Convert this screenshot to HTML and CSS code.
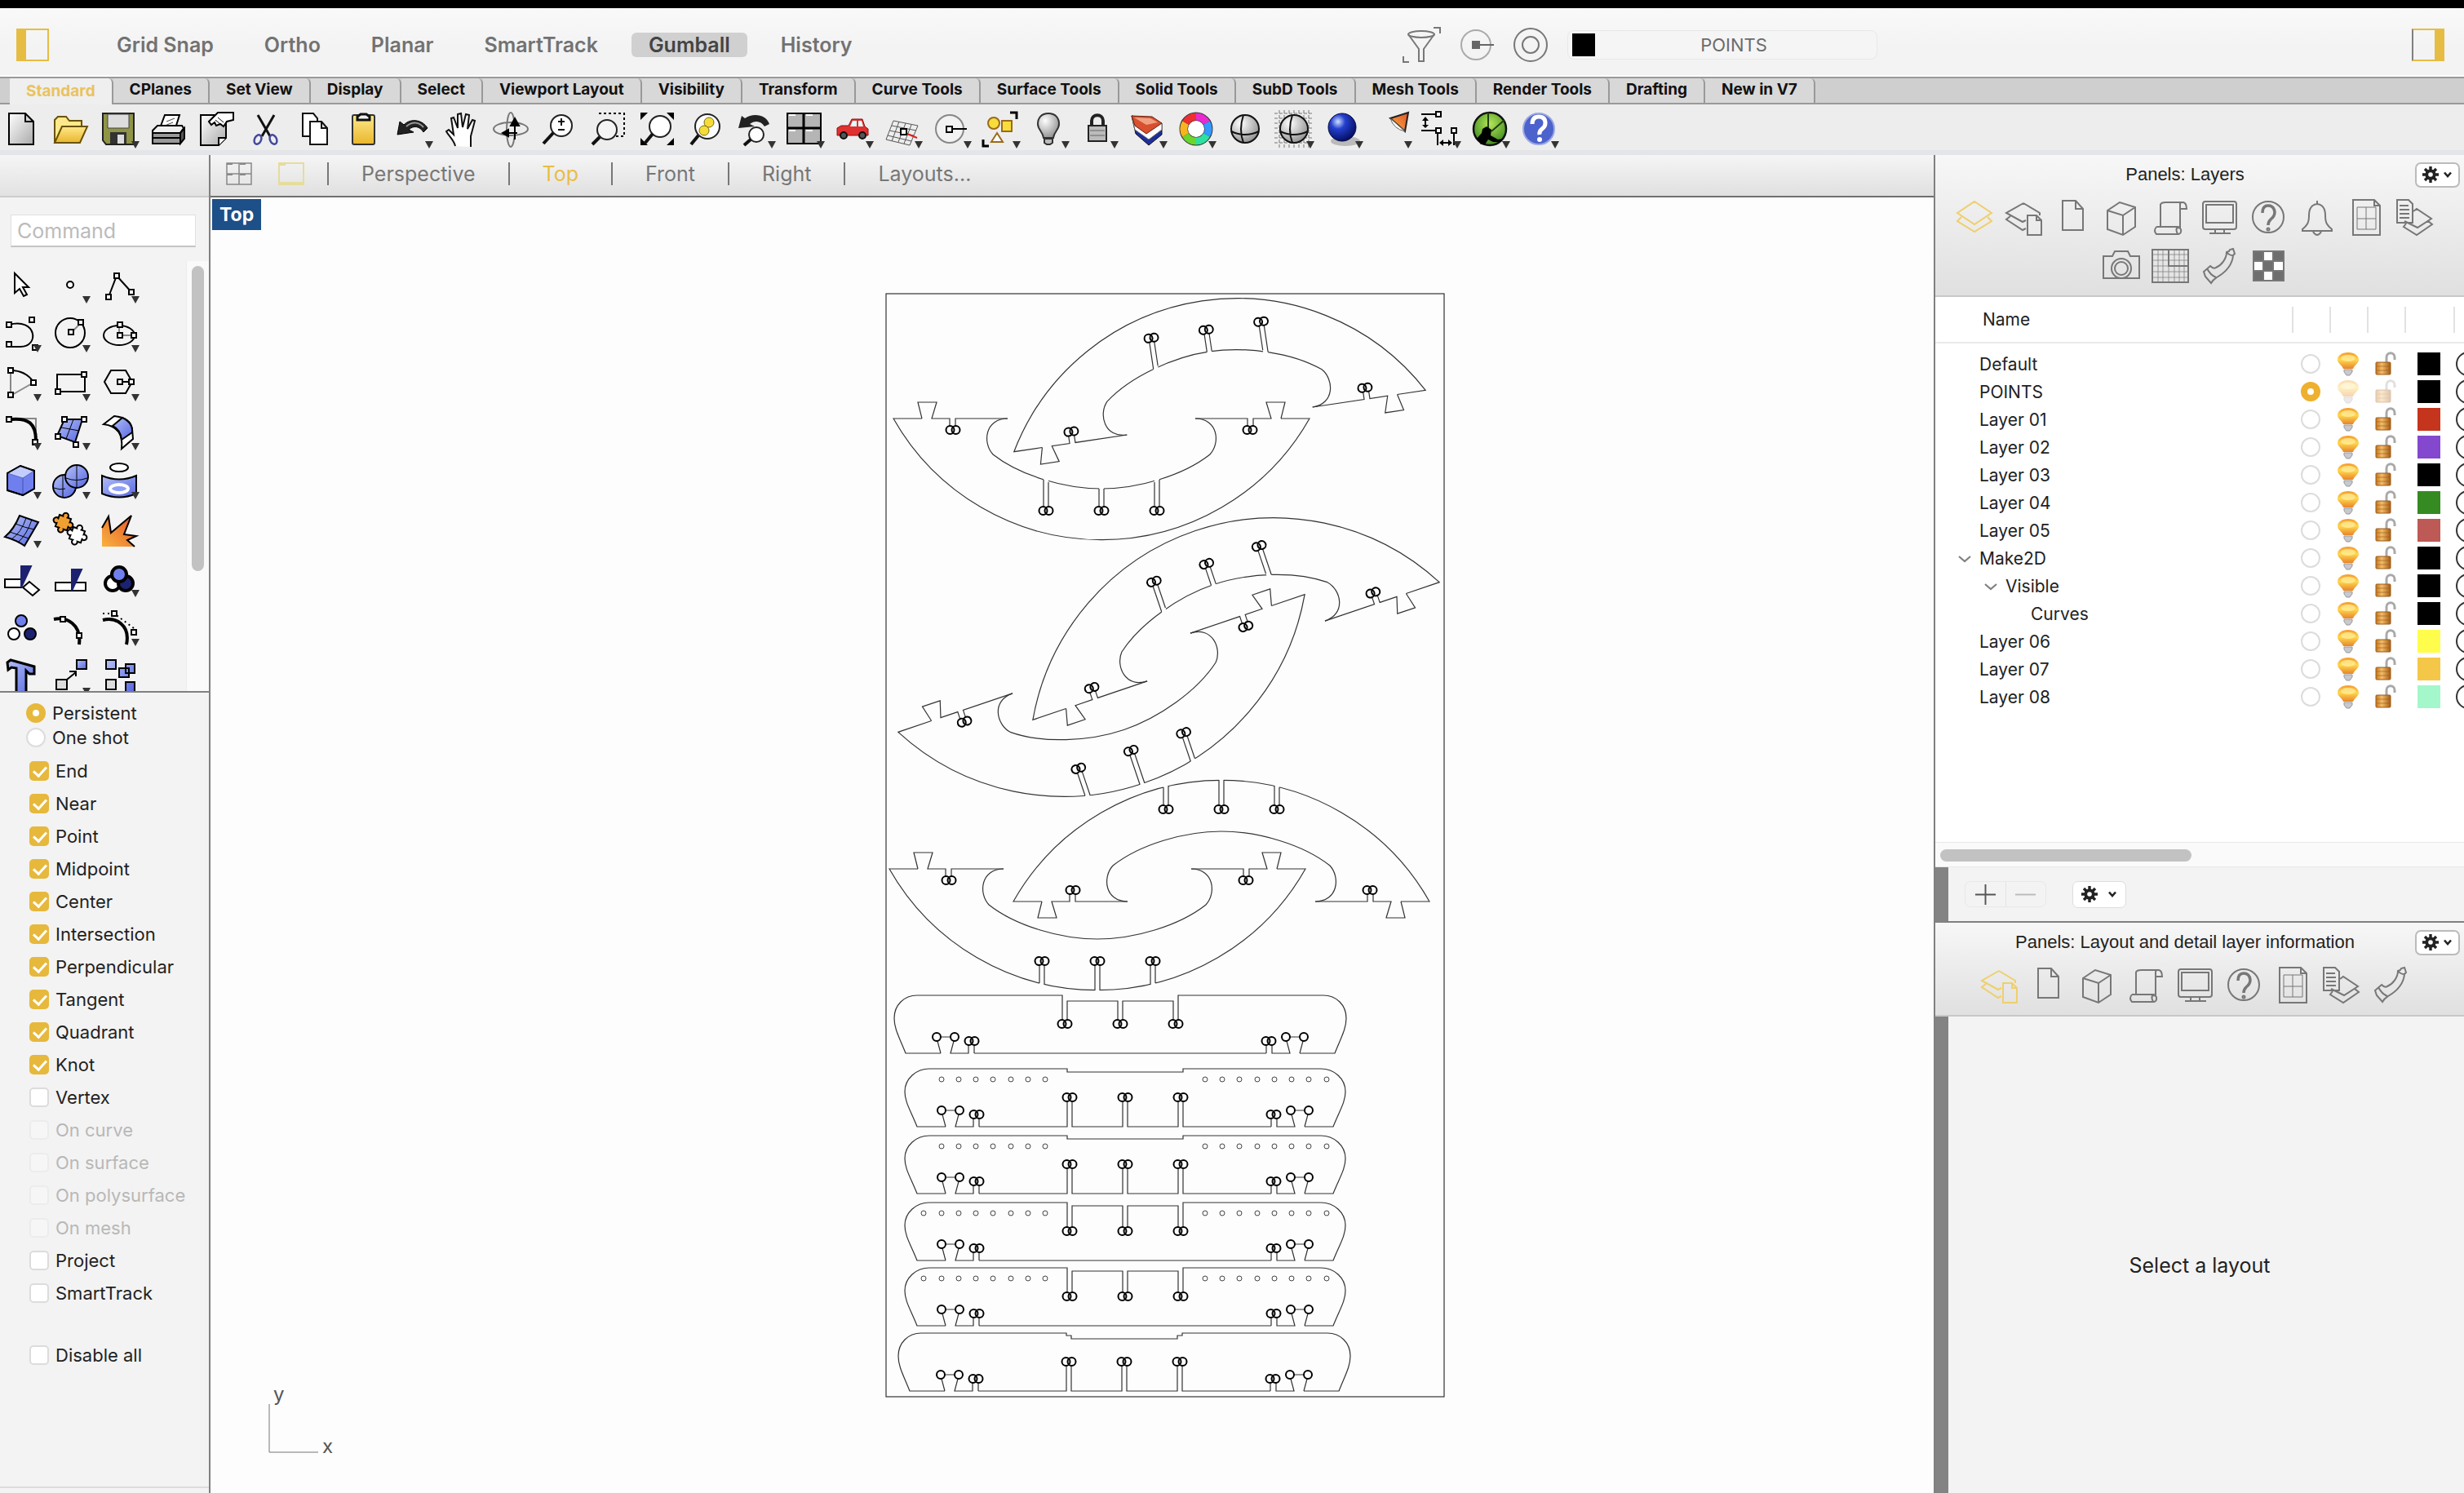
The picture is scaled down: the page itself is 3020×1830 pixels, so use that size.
FILE: index.html
```html
<!DOCTYPE html>
<html lang="en">
<head>
<meta charset="utf-8">
<title>Rhino – Top viewport</title>
<link rel="stylesheet" href="styles.css">
</head>
<body>
<svg class="defs" width="0" height="0" aria-hidden="true">
<defs>
<linearGradient id="gGrey" x1="0" y1="0" x2="1" y2="1"><stop offset="0" stop-color="#fff"/><stop offset="1" stop-color="#aaa"/></linearGradient>
<linearGradient id="gBlue" x1="0" y1="0" x2="1" y2="1"><stop offset="0" stop-color="#b4bff8"/><stop offset="1" stop-color="#5668e0"/></linearGradient>
<linearGradient id="gGold" x1="0" y1="0" x2="0" y2="1"><stop offset="0" stop-color="#ffe98a"/><stop offset="1" stop-color="#e8b62c"/></linearGradient>
<linearGradient id="gOrange" x1="1" y1="0" x2="0" y2="1"><stop offset="0" stop-color="#e2542a"/><stop offset="1" stop-color="#f9b23e"/></linearGradient>
<linearGradient id="gLamp" x1="0" y1="0" x2="0" y2="1"><stop offset="0" stop-color="#f39a2b"/><stop offset=".45" stop-color="#ffd84e"/><stop offset="1" stop-color="#e8842a"/></linearGradient>
<linearGradient id="gLock" x1="0" y1="0" x2="1" y2="0"><stop offset="0" stop-color="#c4761d"/><stop offset=".4" stop-color="#f3bd6b"/><stop offset="1" stop-color="#a55c12"/></linearGradient>
<radialGradient id="gBall" cx=".35" cy=".3" r=".75"><stop offset="0" stop-color="#cfe0ff"/><stop offset=".35" stop-color="#2440cf"/><stop offset="1" stop-color="#030b5c"/></radialGradient>
<radialGradient id="gSilver" cx=".35" cy=".3" r=".8"><stop offset="0" stop-color="#fff"/><stop offset="1" stop-color="#888"/></radialGradient>
<radialGradient id="gGreen" cx=".5" cy=".35" r=".65"><stop offset="0" stop-color="#b5e65a"/><stop offset="1" stop-color="#3d8a1e"/></radialGradient>

<symbol id="bulb" viewBox="0 0 28 30"><path d="M14 1C6 1 1 5 1 10c0 4 5 6 7 11h12c2-5 7-7 7-11 0-5-5-9-13-9z" fill="url(#gLamp)"/><ellipse cx="14" cy="8" rx="9" ry="4" fill="#fff0a0" opacity=".7"/><path d="M9 22h10v3l-3 4h-4l-3-4z" fill="#c8c8cf" stroke="#999" stroke-width="1"/></symbol>
<symbol id="unlock" viewBox="0 0 28 30"><path d="M15 14V7c0-7 10-7 10 0v3" fill="none" stroke="#a9a9a9" stroke-width="3"/><rect x="2" y="13" width="18" height="15" rx="1" fill="url(#gLock)" stroke="#9a5b18"/><path d="M3 18h16M3 23h16" stroke="#9a5b18" stroke-width="1" opacity=".6"/></symbol>
<symbol id="gear" viewBox="0 0 20 20"><g stroke="#222" stroke-width="3.4"><path d="M10 0v20M0 10h20M3 3l14 14M17 3L3 17"/></g><circle cx="10" cy="10" r="6.6" fill="#222"/><circle cx="10" cy="10" r="2.8" fill="#fff"/></symbol>
<symbol id="chev" viewBox="0 0 12 8"><path d="M2 1.500l4 4.500 4-4.500" fill="none" stroke="#222" stroke-width="2.600"/></symbol>
<symbol id="tri" viewBox="0 0 16 9"><path d="M1 1l7 6 7-6" fill="none" stroke="#808080" stroke-width="2.200"/></symbol>

<symbol id="pLayers" viewBox="0 0 48 48"><path d="M24 5L45 19 24 33 3 19zM8 24l-5 5 21 13 21-13-5-5"/></symbol>
<symbol id="pLayerDoc" viewBox="0 0 48 48"><path d="M24 7l20 12v3M27 28l-4 2L3 19 24 7M8 23l-5 4 20 13 4-2"/><path d="M29 22h11l6 6v18H29zM40 22v6h6"/></symbol>
<symbol id="pDoc" viewBox="0 0 48 48"><path d="M12 4h16l9 10v26H12zM28 4v10h9"/></symbol>
<symbol id="pBox" viewBox="0 0 48 48"><path d="M7 16L22 6l19 6v24L26 46 7 39zM7 16l19 6 15-10M26 22v24"/></symbol>
<symbol id="pScroll" viewBox="0 0 48 48"><path d="M12 8q2-2 6-2h22q4 1 4 8h-8M36 14V8q0-2 3-2M12 8v28M36 14v24M7 36h26q-3 3 0 9H7q-4-4 0-9M33 45q5 0 4-6-3-4-6 0"/></symbol>
<symbol id="pMonitor" viewBox="0 0 48 48"><rect x="4" y="5" width="41" height="34" rx="3"/><path d="M8 9h33v22H8zM19 39v4M30 39v4M12 44h26"/></symbol>
<symbol id="pHelp" viewBox="0 0 48 48"><circle cx="24" cy="24" r="19"/><path d="M17 19q0-9 7-9t8 8q0 5-5 9-3 3-3 7" stroke-width="3.500"/><circle cx="24" cy="39" r="1.500"/></symbol>
<symbol id="pBell" viewBox="0 0 48 48"><path d="M24 4v4M24 8c-8 1-10 7-10 14 0 9-2 12-8 17v2h36v-2c-6-5-8-8-8-17 0-7-2-13-10-14zM19 42q5 8 10 0"/></symbol>
<symbol id="pGrid" viewBox="0 0 48 48"><path d="M8 3h26l7 7v36H8zM34 3v7h7"/><path d="M13 12h23v27H13zM24 12v27M13 26h23" stroke-width="1"/></symbol>
<symbol id="pDocLayers" viewBox="0 0 48 48"><path d="M2 3h14l5 5v23H2zM5 10h11M5 15h12M5 20h12M5 25h12M22 17l4-3 18 12-17 11-16-8M40 29l5 4-19 13-16-10 3-4"/></symbol>
<symbol id="pCamera" viewBox="0 0 48 48"><path d="M2 12h11l3-6h16l3 6h11v27H2z"/><circle cx="24" cy="27" r="12"/><circle cx="24" cy="27" r="8"/></symbol>
<symbol id="pPlane" viewBox="0 0 48 48"><path d="M2 4h44v40H2z"/><path d="M2 10h44M2 17h44M2 24h44M2 31h44M2 38h44M9 4v40M15 4v40M22 4v40M29 4v40M35 4v40M41 4v40" stroke-width=".7"/><path d="M22 4v20h24"/></symbol>
<symbol id="pTube" viewBox="0 0 48 48"><path d="M33 7c0 8-6 16-13 19-3 2-5 0-7-2L5 31l2 6 7 8c2-4 4-5 7-7 12-7 19-15 20-27l2-2-2-6-4 1-1 2zM9 27q4 8 11 11M33 7q3 4 8 4"/></symbol>
<symbol id="pCheck" viewBox="0 0 48 48"><path d="M6 6h37v36H6z" fill="#fff"/><path d="M6 6h12v12H6zM30 6h13v12H30zM18 18h12v12H18zM6 30h12v12H6zM30 30h13v12H30z" fill="#6e6e6e"/></symbol>

<g id="pair"><circle cx="-3.500" cy="0" r="5"/><circle cx="3.500" cy="0" r="5"/></g>
<g id="chord">
<path class="ln" d="M-220 0l-5-20h23l-6 20h22v9M-179 9V0h64M220 0l5-20h-23l6 20h-22v9M179 9V0h-64"/>
<path class="ln" d="M-115 0C-143 0-146 30-133 44M115 0C143 0 146 30 133 44"/>
<g class="hole"><use href="#pair" x="-182" y="14"/><use href="#pair" x="182" y="14"/></g>
</g>
<g id="heads" class="hole"><use href="#pair" x="-68" y="113"/><use href="#pair" x="0" y="113"/><use href="#pair" x="68" y="113"/></g>
<path id="inner" class="ln" d="M-133 44C-100 70-45 86 0 86S100 70 133 44"/>
<path id="outer" class="ln" d="M-220 0h-35A293 293 0 0 0 255 0h-35"/>
<path id="outerWide" class="ln" d="M-220 0h-43A300 300 0 0 0 263 0h-43"/>
<g id="slotsIn"><path class="gap" d="M-71 72h6v12h-6zM-3 82h6v8h-6zM65 72h6v12h-6z"/><path class="ln" d="M-71 75v33M-65 78v30M-3 86v22M3 86v22M65 78v30M71 75v33"/></g>
<g id="slotsOut"><path class="gap" d="M-71 136h6v10h-6zM-3 144h6v8h-6zM65 136h6v10h-6z"/><path class="ln" d="M-71 118v22M-65 118v24M-3 118v31M3 118v31M65 118v24M71 118v22"/></g>
<g id="slotsOutWide"><path class="gap" d="M-71 143h6v10h-6zM-3 152h6v8h-6zM65 143h6v10h-6z"/><path class="ln" d="M-71 118v29M-65 118v31M-3 118v38M3 118v38M65 118v31M71 118v29"/></g>

<g id="feet">
<path class="ln" d="M-220 71l-4-15M-219 51h11M-204 56l-4 15h22V61M-179 61v10M220 71l4-15M219 51h-11M204 56l4 15h-22V61M179 61v10"/>
<g class="hole"><circle cx="-225" cy="51" r="5"/><circle cx="-203" cy="51" r="5"/><circle cx="225" cy="51" r="5"/><circle cx="203" cy="51" r="5"/><use href="#pair" x="-182" y="56"/><use href="#pair" x="182" y="56"/><use href="#pair" x="-68" y="35"/><use href="#pair" x="0" y="35"/><use href="#pair" x="68" y="35"/></g>
</g>
<path id="endsWide" class="ln" d="M-220 71h-43c-8-20-14-30-14-43 0-16 12-28 28-28M220 71h43c8-20 14-30 14-43 0-16-12-28-28-28"/>
<path id="ends" class="ln" d="M-220 71h-35c-8-20-15-30-15-43 0-16 14-28 30-28M220 71h35c8-20 15-30 15-43 0-16-14-28-30-28"/>
<path id="baseOpen" class="ln" d="M-179 71h108V40M-65 40v31h62V40M3 40v31h62V40M71 40v31h108"/>
<path id="baseFlat" class="ln" d="M-179 71h358"/>
<path id="topSlots" class="ln" d="M-240 0h169v30M-65 30V4h62v26M3 30V4h62v26M71 30V0h169"/>
<path id="topStep" class="ln" d="M-240 0h169v4H71V0h169"/>
<g id="dots7" class="dot"><circle cx="-225" cy="13" r="3"/><circle cx="-204" cy="13" r="3"/><circle cx="-183" cy="13" r="3"/><circle cx="-162" cy="13" r="3"/><circle cx="-140" cy="13" r="3"/><circle cx="-119" cy="13" r="3"/><circle cx="-98" cy="13" r="3"/></g>
<g id="dots8" class="dot"><circle cx="98" cy="13" r="3"/><circle cx="119" cy="13" r="3"/><circle cx="140" cy="13" r="3"/><circle cx="162" cy="13" r="3"/><circle cx="183" cy="13" r="3"/><circle cx="204" cy="13" r="3"/><circle cx="225" cy="13" r="3"/><circle cx="247" cy="13" r="3"/></g>
<path id="puzzle" d="M0 0h4.500a3.400 3.400 0 1 1 6 0H15v4.500a3.400 3.400 0 1 1 0 6V15h-4.500a3.400 3.400 0 1 1-6 0H0v-4.500a3.400 3.400 0 1 1 0-6z"/>
</defs>
</svg>

<div class="app">
<header class="titlebar">
  <button class="side-toggle" aria-label="Toggle left sidebar"></button>
  <nav class="modes">
    <button>Grid Snap</button><button>Ortho</button><button>Planar</button><button>SmartTrack</button><button class="on">Gumball</button><button>History</button>
  </nav>
  <div class="status">
    <button aria-label="Selection filter"><svg viewBox="0 0 44 44"><g fill="none" stroke="#777" stroke-width="2"><path d="M6 9l13 18v15h6V27L38 9"/><ellipse cx="22" cy="9" rx="16" ry="4"/><path d="M37 1h8v7M0 36v7h7"/></g></svg></button>
    <button aria-label="Record history"><svg viewBox="0 0 44 44"><circle cx="22" cy="22" r="18" fill="none" stroke="#aaa" stroke-width="2"/><path d="M18 18h8v8h-8zM26 22h18" fill="#666" stroke="#666" stroke-width="2"/></svg></button>
    <button aria-label="Osnap target"><svg viewBox="0 0 44 44"><g fill="none" stroke="#777" stroke-width="2"><circle cx="22" cy="22" r="20"/><circle cx="22" cy="22" r="10"/></g></svg></button>
    <button class="current-layer"><span class="chip"></span><span class="label">POINTS</span></button>
  </div>
  <button class="side-toggle right" aria-label="Toggle right sidebar"></button>
</header>

<nav class="tabs">
  <button class="on">Standard</button><button>CPlanes</button><button>Set View</button><button>Display</button><button>Select</button><button>Viewport Layout</button><button>Visibility</button><button>Transform</button><button>Curve Tools</button><button>Surface Tools</button><button>Solid Tools</button><button>SubD Tools</button><button>Mesh Tools</button><button>Render Tools</button><button>Drafting</button><button>New in V7</button>
</nav>

<div class="toolbar">
  <button aria-label="New"><svg viewBox="0 0 44 44"><path d="M7 2h20l10 10v28H7z" fill="url(#gGrey)" stroke="#000" stroke-width="2"/><path d="M27 2v10h10" fill="none" stroke="#000" stroke-width="2"/></svg></button>
  <button aria-label="Open"><svg viewBox="0 0 44 44"><path d="M3 38V10l4-4h10l4 5h15v7" fill="#ffe98a" stroke="#6b5200" stroke-width="2"/><path d="M3 38l9-20h31l-9 20z" fill="url(#gGold)" stroke="#6b5200" stroke-width="2"/></svg></button>
  <button class="drop" aria-label="Save"><svg viewBox="0 0 44 44"><path d="M2 2h38v38H6l-4-5z" fill="#8f9447" stroke="#222" stroke-width="2"/><path d="M8 3h26v17H8z" fill="#ddd" stroke="#444"/><path d="M11 25h20v14H11z" fill="#333"/><path d="M20 28h8v11h-8z" fill="#ddd"/></svg></button>
  <button aria-label="Print"><svg viewBox="0 0 44 44"><path d="M12 20L18 4h18l-5 16z" fill="#fff" stroke="#000" stroke-width="2"/><path d="M20 12l10-4M18 17l10-4" stroke="#444"/><path d="M3 23l6-6h30l2 3-4 6H3z" fill="#eee" stroke="#000" stroke-width="2"/><path d="M3 26h34v6H3zM3 32h34v7H3z" fill="#999" stroke="#000" stroke-width="2"/><path d="M37 26l5-6v13l-5 6z" fill="#555" stroke="#000" stroke-width="2"/></svg></button>
  <button aria-label="Document properties"><svg viewBox="0 0 44 44"><path d="M2 4h31v28l-9 9H2z" fill="url(#gGrey)" stroke="#000" stroke-width="2"/><path d="M33 32h-9v9" fill="#fff" stroke="#000" stroke-width="2"/><path d="M12 12L23 1h19v9l-8 2-4 6-4-3-5 2-2-4-4 3z" fill="#fff" stroke="#000" stroke-width="2"/><path d="M20 10l6 5M23 7l7 6" stroke="#000"/></svg></button>
  <button aria-label="Cut"><svg viewBox="0 0 44 44"><path d="M12 4l15 26M32 4L17 30" stroke="#111" stroke-width="3"/><g fill="none" stroke="#44489c" stroke-width="2.500"><ellipse cx="12" cy="34" rx="4" ry="6" transform="rotate(25 12 34)"/><ellipse cx="31" cy="34" rx="4" ry="6" transform="rotate(-25 31 34)"/></g></svg></button>
  <button aria-label="Copy"><svg viewBox="0 0 44 44"><g fill="#fff" stroke="#111" stroke-width="2"><path d="M7 2h13l5 6v22H7z"/><path d="M16 12h14l7 8v20H16zM30 12v8h7"/></g></svg></button>
  <button aria-label="Paste"><svg viewBox="0 0 44 44"><rect x="8" y="4" width="27" height="36" rx="2" fill="url(#gGold)" stroke="#333" stroke-width="2"/><path d="M14 10V6l4-3h7l4 3v4z" fill="#eee" stroke="#111" stroke-width="3"/></svg></button>
  <button class="drop" aria-label="Undo"><svg viewBox="0 0 44 44"><path d="M3 28L6 12l5 4c9-9 23-6 29 4l-5 5c-4-7-12-9-18-3l6 3z" fill="#222" stroke="#000"/><path d="M14 18c8-7 16-5 21 1" stroke="#999" stroke-width="2" fill="none"/></svg></button>
  <button aria-label="Pan"><svg viewBox="0 0 44 44"><path d="M14 42c-2-8-8-12-11-18l3-2 6 6L9 8l3-1 5 13V3l4-1 2 17 4-16 4 1-2 17 6-11 3 1-5 19v13" fill="#fff" stroke="#111" stroke-width="2"/></svg></button>
  <button aria-label="Rotate view"><svg viewBox="0 0 44 44"><g fill="none" stroke="#777" stroke-width="2"><ellipse cx="22" cy="21" rx="21" ry="8"/><ellipse cx="22" cy="22" rx="5" ry="21"/></g><path d="M27 34V14M22 17l5-9 5 9zM30 26H17M19 22l-7 4 7 4z" stroke="#000" stroke-width="2"/></svg></button>
  <button aria-label="Zoom dynamic"><svg viewBox="0 0 44 44"><circle cx="24" cy="17" r="13" fill="#fff" stroke="#222" stroke-width="2"/><path d="M14 26L2 39" stroke="#111" stroke-width="4"/><path d="M24 8v9M20 12h8M20 22h8" stroke="#111" stroke-width="2"/></svg></button>
  <button aria-label="Zoom window"><svg viewBox="0 0 44 44"><path d="M10 2h31v28H30" fill="none" stroke="#000" stroke-width="2" stroke-dasharray="3 3"/><circle cx="20" cy="22" r="12" fill="#f4f4f4" stroke="#222" stroke-width="2"/><path d="M11 31L2 40" stroke="#111" stroke-width="4"/></svg></button>
  <button aria-label="Zoom extents"><svg viewBox="0 0 44 44"><path d="M1 1h9l-9 9zM42 1v9l-9-9zM1 41v-9l9 9zM42 41h-9l9-9z"/><circle cx="25" cy="18" r="13" fill="#fff" stroke="#222" stroke-width="2"/><path d="M16 27L6 39" stroke="#111" stroke-width="4"/></svg></button>
  <button aria-label="Zoom selected"><svg viewBox="0 0 44 44"><circle cx="23" cy="18" r="15" fill="#fff" stroke="#222" stroke-width="2"/><path d="M12 29L3 40" stroke="#111" stroke-width="4"/><circle cx="25" cy="13" r="6" fill="#f5dc3a" stroke="#7a6a10"/><circle cx="19" cy="23" r="6" fill="#f5dc3a" stroke="#7a6a10"/></svg></button>
  <button class="drop" aria-label="Undo view"><svg viewBox="0 0 44 44"><path d="M1 20L5 5l4 3c10-7 26-5 30 7l-6 3c-4-7-12-8-18-3l6 3z" fill="#222"/><circle cx="23" cy="28" r="9" fill="#fff" stroke="#222" stroke-width="2"/><path d="M16 34l-8 7" stroke="#111" stroke-width="4"/></svg></button>
  <button class="drop" aria-label="Four viewports"><svg viewBox="0 0 44 44"><path d="M1 2h41v37H1z" fill="#b5b5b5" stroke="#000" stroke-width="2"/><path d="M21 2v37M1 20h41" stroke="#000" stroke-width="3"/><path d="M3 4h8M24 4h8M3 23h8M24 23h8" stroke="#fff" stroke-width="2"/></svg></button>
  <button class="drop" aria-label="Right view"><svg viewBox="0 0 44 44"><path d="M2 20l5-3h9l4-8h13l3 9 4 3v8H2z" fill="#e03030" stroke="#931010"/><path d="M21 11h5v7h-8zM28 11h4l2 7h-6z" fill="#dff"/><g fill="#555" stroke="#111" stroke-width="2"><circle cx="10" cy="29" r="4"/><circle cx="33" cy="29" r="4"/></g></svg></button>
  <button class="drop" aria-label="Construction plane"><svg viewBox="0 0 44 44"><g fill="none" stroke="#555"><path d="M11 11l30 6-10 24-29-7zM18 12L9 36M26 14l-9 23M33 16l-9 23M9 17l30 6M6 23l30 6M4 29l29 7"/></g><path d="M23 25l17 7" stroke="#d22" stroke-width="2"/><path d="M20 21h7v7h-7z" fill="#fff" stroke="#000" stroke-width="2"/></svg></button>
  <button class="drop" aria-label="Osnap"><svg viewBox="0 0 44 44"><circle cx="20" cy="21" r="17" fill="#f2f2f2" stroke="#888" stroke-width="2"/><path d="M24 21h17" stroke="#000" stroke-width="2"/><path d="M16 18h7v7h-7z" fill="#fff" stroke="#000" stroke-width="2"/></svg></button>
  <button class="drop" aria-label="Select"><svg viewBox="0 0 44 44"><g fill="#f7dd3c" stroke="#9b6a1a" stroke-width="2"><circle cx="14" cy="14" r="7"/><path d="M24 11h12v13H24z"/><path d="M18 26l7 11H11z" fill="#fff"/></g><path d="M34 1h8v8M1 34v8h7" fill="none" stroke="#000" stroke-width="3"/></svg></button>
  <button class="drop" aria-label="Lights"><svg viewBox="0 0 44 44"><path d="M21 2C12 2 8 8 8 15c0 7 6 9 7 17h12c1-8 7-10 7-17 0-7-4-13-13-13z" fill="url(#gSilver)" stroke="#333" stroke-width="2"/><path d="M16 33h10v5l-3 2h-4l-3-2z" fill="#bbb" stroke="#333" stroke-width="2"/></svg></button>
  <button class="drop" aria-label="Lock"><svg viewBox="0 0 44 44"><path d="M14 17V11c0-9 14-9 14 0v6" fill="none" stroke="#222" stroke-width="4"/><path d="M10 17h22v19H10z" fill="#bbb" stroke="#222" stroke-width="2"/><path d="M12 23h18M12 29h18" stroke="#666"/></svg></button>
  <button class="drop" aria-label="Layers"><svg viewBox="0 0 44 44"><path d="M3 5l5 22 16 14 16-13V14z" fill="#1d2f9e" stroke="#111"/><path d="M3 5l4 17 17 12 16-12v-8z" fill="#fff" stroke="#666"/><path d="M3 5l25 1 12 8-19 13L7 17z" fill="#d9502f" stroke="#602010"/><path d="M6 7l20 1 9 5-14 3z" fill="#f0a080"/></svg></button>
  <button class="drop" aria-label="Object properties"><svg viewBox="0 0 44 44"><g fill="none" stroke-width="9"><circle cx="22" cy="21" r="15" stroke="#333" stroke-width="11"/><path d="M22 6a15 15 0 0 1 13 7.500" stroke="#e82ad0"/><path d="M35 13.500a15 15 0 0 1 0 15" stroke="#39f"/><path d="M35 28.500a15 15 0 0 1-13 7.500" stroke="#2de0a0"/><path d="M22 36a15 15 0 0 1-13-7.500" stroke="#6ad52c"/><path d="M9 28.500a15 15 0 0 1 0-15" stroke="#f6b51e"/><path d="M9 13.500A15 15 0 0 1 22 6" stroke="#ee2f2f"/></g><circle cx="22" cy="21" r="10" fill="#fff"/></svg></button>
  <button aria-label="Shade"><svg viewBox="0 0 44 44"><circle cx="22" cy="21" r="17" fill="url(#gSilver)" stroke="#111" stroke-width="2"/><path d="M20 4q-6 18 0 34M5 24q17 8 34 0" fill="none" stroke="#111" stroke-width="2"/></svg></button>
  <button class="drop" aria-label="Wireframe viewport"><svg viewBox="0 0 44 44"><path d="M4-2v46M10-2v46M16-2v46M22-2v46M28-2v46M34-2v46M40-2v46M-2 2h48M-2 8h48M-2 14h48M-2 20h48M-2 26h48M-2 32h48M-2 38h48" stroke="#777" stroke-dasharray="4 2"/><circle cx="22" cy="21" r="17" fill="url(#gSilver)" stroke="#111" stroke-width="2"/><path d="M20 4q-6 18 0 34M5 24q17 8 34 0" fill="none" stroke="#111" stroke-width="2"/></svg></button>
  <button class="drop" aria-label="Render"><svg viewBox="0 0 44 44"><ellipse cx="25" cy="36" rx="18" ry="6" fill="#888" opacity=".5"/><circle cx="21" cy="19" r="17" fill="url(#gBall)" stroke="#03083c"/></svg></button>
  <button class="drop" aria-label="Spotlight"><svg viewBox="0 0 44 44"><path d="M20 8L42 1 38 24z" fill="url(#gOrange)" stroke="#222" stroke-width="2"/><path d="M20 8l18 16q-14-3-18-16z" fill="#fff" stroke="#666"/></svg></button>
  <button class="drop" aria-label="Dimension"><svg viewBox="0 0 44 44"><g stroke="#000" stroke-width="2" fill="#fff"><path d="M-2 3h18M-2 23h18M3 8v11M18 26v15M38 26v15M22 38h12" fill="none"/><path d="M16 0h6v6h-6zM16 20h6v6h-6zM35 20h6v6h-6z"/></g><path d="M3 6l4 5H-1zM3 20l4-4H-1zM20 38l5-4v8zM36 38l-5-4v8z"/></svg></button>
  <button class="drop" aria-label="Grasshopper"><svg viewBox="0 0 44 44"><circle cx="22" cy="21" r="20" fill="url(#gGreen)" stroke="#111" stroke-width="2.500"/><path d="M20 1v20M40 10L24 24" stroke="#1f3f10" stroke-width="2" fill="none"/><path d="M6 33l6-7 1-5 5-3 6 4-1 7 9 5 6-1-3 4-9 0-6-3-4 6-5 0z"/></svg></button>
  <button class="drop" aria-label="Help"><svg viewBox="0 0 44 44"><circle cx="22" cy="21" r="19" fill="#4c62cc" stroke="#9aa6e2" stroke-width="2"/><path d="M14 15q0-9 8-9t8 8q0 4-4 7-4 3-3 7" fill="none" stroke="#fff" stroke-width="5"/><circle cx="23" cy="34" r="3" fill="#fff"/></svg></button>
</div>

<main class="work">
<aside class="left">
  <div class="cap"></div>
  <div class="command"><input type="text" placeholder="Command" aria-label="Command"></div>
  <div class="palette">
   <div class="tools">
    <button aria-label="Select"><svg viewBox="0 0 44 44"><path d="M14 8v24l6-5 5 9 4-2-5-9h7z" fill="#fff" stroke="#000" stroke-width="2"/></svg></button>
    <button class="drop" aria-label="Point"><svg viewBox="0 0 44 44"><circle cx="22" cy="22" r="4" fill="#fff" stroke="#000" stroke-width="2"/></svg></button>
    <button class="drop" aria-label="Polyline"><svg viewBox="0 0 44 44" class="k"><path d="M9 37L19 11l18 20" fill="none"/><path class="n" d="M16 8h6v6h-6zM6 34h6v6H6zM34 28h6v6h-6z"/></svg></button>
    <button class="drop" aria-label="Curve"><svg viewBox="0 0 44 44" class="k"><path d="M7 11c34-9 38 27 14 27H7" fill="none"/><path class="n" d="M4 8h6v6H4zM32 2h6v6h-6zM4 32h6v6H4zM36 36h6v6h-6z"/></svg></button>
    <button class="drop" aria-label="Circle"><svg viewBox="0 0 44 44" class="k"><circle cx="22" cy="21" r="18" fill="none"/><path d="M23 21L35 9" fill="none" stroke="#888"/><path class="n" d="M20 17h6v6h-6zM32 5h6v6h-6z"/></svg></button>
    <button class="drop" aria-label="Ellipse"><svg viewBox="0 0 44 44" class="k"><ellipse cx="22" cy="24" rx="19" ry="12" fill="none"/><path d="M22 24V11M22 24h18" fill="none" stroke="#888"/><path class="n" d="M20 21h6v6h-6zM20 8h6v6h-6zM37 21h6v6h-6z"/></svg></button>
    <button class="drop" aria-label="Arc"><svg viewBox="0 0 44 44" class="k"><path d="M9 38V7M9 38l28-16" stroke="#888"/><path d="M9 7q18 0 28 14" fill="none"/><path class="n" d="M6 4h6v6H6zM6 34h6v6H6zM34 19h6v6h-6z"/></svg></button>
    <button class="drop" aria-label="Rectangle"><svg viewBox="0 0 44 44" class="k"><path d="M6 12h34v21H6z" fill="none"/><path class="n" d="M36 9h6v6h-6zM4 30h6v6H4z"/></svg></button>
    <button class="drop" aria-label="Polygon"><svg viewBox="0 0 44 44" class="k"><path d="M4 21l8-14h18l8 14-8 14H12zM22 21h14" fill="none"/><path class="n" d="M20 18h6v6h-6zM34 18h6v6h-6z"/></svg></button>
    <button class="drop" aria-label="Fillet"><svg viewBox="0 0 44 44" class="k"><path d="M10 6h30v26" fill="none" stroke="#888"/><path d="M9 7c22-2 31 5 31 26" fill="none" stroke-width="4"/><path class="n" d="M4 4h6v6H4zM36 32h6v6h-6z"/></svg></button>
    <button class="drop" aria-label="Surface from points"><svg viewBox="0 0 44 44" class="k"><path d="M15 7h22L28 35 6 27z" fill="url(#gBlue)"/><path d="M26 7l-9 24M11 17l22 4" stroke-width="1"/><path class="n" d="M12 4h6v6h-6zM36 4h6v6h-6zM4 25h6v6H4zM26 35h6v6h-6z"/></svg></button>
    <button class="drop" aria-label="Blend surface"><svg viewBox="0 0 44 44" class="k"><path d="M3 13L16 3q20 2 22 16l1 12-14 12q3-27-22-30z" fill="#fff"/><path d="M26 5q13 6 12 18l-13 9q-1-12-11-17z" fill="url(#gBlue)"/></svg></button>
    <button class="drop" aria-label="Box"><svg viewBox="0 0 44 44" class="k"><path d="M5 13l16-9 17 6v22L24 40 5 34z" fill="#6f80ee"/><path d="M5 13l16-9 17 6-14 9z" fill="#c3cdfb" stroke="#5a68c8" stroke-width="1"/><path d="M24 19v21" stroke="#4350b0" stroke-width="1"/><path d="M5 13l16-9 17 6v22L24 40 5 34z" fill="none"/></svg></button>
    <button class="drop" aria-label="Boolean"><svg viewBox="0 0 44 44" class="k"><circle cx="15" cy="29" r="14" fill="url(#gBlue)"/><circle cx="30" cy="17" r="14" fill="url(#gBlue)"/><path d="M17 19q12 5 26 0M30 3v28M2 31q7 3 14 1M13 16v27" fill="none" stroke-width="1"/></svg></button>
    <button class="drop" aria-label="Project curve"><svg viewBox="0 0 44 44" class="k"><ellipse cx="22" cy="6" rx="11" ry="5" fill="#fff"/><path d="M1 16q21 9 42 0v22q-21 9-42 0z" fill="url(#gBlue)"/><ellipse cx="22" cy="32" rx="11" ry="5" fill="#8fa0f8" stroke="#fff" stroke-width="4"/></svg></button>
    <button class="drop" aria-label="Surface mesh"><svg viewBox="0 0 44 44" class="k"><path d="M2 31Q13 22 20 5l23 8Q33 30 26 42q-10-7-24-11z" fill="url(#gBlue)"/><path d="M28 8Q22 26 10 34M35 10Q29 28 18 38M15 15q12 5 23 7M8 25q12 4 23 8" fill="none" stroke-width="1"/></svg></button>
    <button aria-label="Join"><svg viewBox="0 0 44 44" class="k"><use href="#puzzle" fill="#f0a030" transform="translate(9 4) rotate(20)"/><use href="#puzzle" fill="#fff" transform="translate(26 19) rotate(20)"/></svg></button>
    <button aria-label="Explode"><svg viewBox="0 0 44 44" class="k"><path d="M1 43V20L9 6l3 20L37 5 28 28l15 2-11 5 9 8z" fill="url(#gOrange)" stroke="none"/><path d="M1 20L9 6l3 20L37 5 28 28l15 2-11 5 9 8" fill="none"/></svg></button>
    <button aria-label="Trim"><svg viewBox="0 0 44 44" class="k"><path d="M2 23h20v10H2zM24 33l8-7 12 10-8 7z" fill="#fff"/><path d="M22 7h12L22 33z" fill="#1c2270" stroke="#1c2270"/></svg></button>
    <button aria-label="Split"><svg viewBox="0 0 44 44" class="k"><path d="M4 27h37v10H4z" fill="#fff"/><path d="M24 11h12L24 37z" fill="#1c2270" stroke="#1c2270"/></svg></button>
    <button class="drop" aria-label="Group"><svg viewBox="0 0 44 44" class="k"><g stroke-width="4"><circle cx="14" cy="28" r="9" fill="#fff"/><circle cx="30" cy="28" r="9" fill="#1c2270"/><circle cx="22" cy="17" r="9" fill="#6f80ee"/></g></svg></button>
    <button aria-label="Ungroup"><svg viewBox="0 0 44 44" class="k"><circle cx="22" cy="14" r="7" fill="#6f80ee"/><circle cx="13" cy="30" r="7" fill="#fff"/><circle cx="33" cy="30" r="7" fill="#1c2270"/></svg></button>
    <button aria-label="Edit points"><svg viewBox="0 0 44 44" class="k"><path d="M2 12c16-3 34 6 31 31" fill="none" stroke-width="4"/><path class="n" d="M10 9h6v6h-6zM30 29h6v6h-6z"/></svg></button>
    <button class="drop" aria-label="Control points"><svg viewBox="0 0 44 44" class="k"><path d="M2 13c16-4 34 6 29 30" fill="none" stroke-width="4"/><path d="M2 5h14l24 18v8" fill="none" stroke-dasharray="2 4"/><path class="n" d="M13 2h6v6h-6zM37 25h6v6h-6z"/></svg></button>
    <button aria-label="Text"><svg viewBox="0 0 44 44" class="k"><path d="M5 5l4-3 29 8v9h-6l-4-4v29H16V12l-6-1-4 3z" fill="url(#gBlue)" stroke-width="3"/></svg></button>
    <button class="drop" aria-label="Scale"><svg viewBox="0 0 44 44" class="k"><path d="M5 26h13v12H5z" fill="#ddd"/><path d="M30 2h12v11H30z" fill="url(#gBlue)"/><path d="M18 26L29 17M21 16h8v6" fill="none"/></svg></button>
    <button aria-label="Array"><svg viewBox="0 0 44 44" class="k"><path d="M6 2h12v11H6zM30 7h11v11H30zM22 12h12v11H22zM30 29h11v12H30z" fill="url(#gBlue)"/><path d="M6 26h12v12H6z" fill="#ddd"/></svg></button>
   </div>
   <div class="vscroll"><span></span></div>
  </div>
  <form class="osnap">
    <label class="pick"><input type="radio" name="mode" checked>Persistent</label>
    <label class="pick"><input type="radio" name="mode">One shot</label>
    <fieldset>
    <label><input type="checkbox" checked>End</label>
    <label><input type="checkbox" checked>Near</label>
    <label><input type="checkbox" checked>Point</label>
    <label><input type="checkbox" checked>Midpoint</label>
    <label><input type="checkbox" checked>Center</label>
    <label><input type="checkbox" checked>Intersection</label>
    <label><input type="checkbox" checked>Perpendicular</label>
    <label><input type="checkbox" checked>Tangent</label>
    <label><input type="checkbox" checked>Quadrant</label>
    <label><input type="checkbox" checked>Knot</label>
    <label><input type="checkbox">Vertex</label>
    <label class="off"><input type="checkbox" disabled>On curve</label>
    <label class="off"><input type="checkbox" disabled>On surface</label>
    <label class="off"><input type="checkbox" disabled>On polysurface</label>
    <label class="off"><input type="checkbox" disabled>On mesh</label>
    <label><input type="checkbox">Project</label>
    <label><input type="checkbox">SmartTrack</label>
    </fieldset>
    <label class="all"><input type="checkbox">Disable all</label>
  </form>
</aside>

<section class="center">
  <nav class="views">
    <button class="vi" aria-label="Four views"><svg viewBox="0 0 32 28"><path d="M1 1h30v26H1zM16 1v26M1 14h30" fill="none" stroke="#888" stroke-width="1.500"/><path d="M1 2h7M17 2h7M1 15h7M17 15h7" stroke="#888" stroke-width="2"/></svg></button>
    <button class="vi" aria-label="Single view"><svg viewBox="0 0 32 28"><path d="M1 1h30v26H1z" fill="none" stroke="#e6dc9c" stroke-width="2"/><path d="M1 3h8M1 25h30" stroke="#e6dc9c" stroke-width="2"/></svg></button>
    <button>Perspective</button><button class="on">Top</button><button>Front</button><button>Right</button><button>Layouts...</button>
  </nav>
  <div class="viewport">
    <span class="vlabel">Top</span>
    <svg class="canvas" viewBox="258 242 2112 1588" preserveAspectRatio="xMinYMin meet">
      <rect class="sheet" x="1086" y="360" width="684" height="1352"/>
      <g transform="translate(1495 516) rotate(171.500)"><use href="#outer"/><use href="#inner"/><use href="#slotsIn"/><use href="#chord"/><use href="#heads"/></g>
      <g transform="translate(1350 513)"><use href="#outer"/><use href="#inner"/><use href="#slotsIn"/><use href="#chord"/><use href="#heads"/></g>
      <g transform="translate(1515 798) rotate(161.300)"><use href="#outerWide"/><use href="#inner"/><use href="#slotsIn"/><use href="#chord"/><use href="#heads"/></g>
      <g transform="translate(1350 813) rotate(-18.700)"><use href="#outerWide"/><use href="#inner"/><use href="#slotsOutWide"/><use href="#chord"/><use href="#heads"/></g>
      <g transform="translate(1497 1105) rotate(180)"><use href="#outer"/><use href="#inner"/><use href="#slotsOut"/><use href="#chord"/><use href="#heads"/></g>
      <g transform="translate(1345 1065)"><use href="#outer"/><use href="#inner"/><use href="#slotsOut"/><use href="#chord"/><use href="#heads"/></g>
      <g transform="translate(1373 1220)"><use href="#endsWide"/><path class="ln" d="M-249 0h178v30M-65 30V7h62v23M3 30V7h62v23M71 30V0h178"/><use href="#baseFlat"/><use href="#feet"/></g>
      <g transform="translate(1379 1310)"><use href="#ends"/><use href="#topStep"/><use href="#baseOpen"/><use href="#feet"/><use href="#dots7"/><use href="#dots8"/></g>
      <g transform="translate(1379 1392)"><use href="#ends"/><use href="#topStep"/><use href="#baseOpen"/><use href="#feet"/><use href="#dots7"/><use href="#dots8"/></g>
      <g transform="translate(1379 1474)"><use href="#ends"/><use href="#topSlots"/><use href="#baseFlat"/><use href="#feet"/><use href="#dots8"/><use href="#dots8" transform="scale(-1 1)"/></g>
      <g transform="translate(1379 1554)"><use href="#ends"/><use href="#topSlots"/><use href="#baseFlat"/><use href="#feet"/><use href="#dots8"/><use href="#dots8" transform="scale(-1 1)"/></g>
      <g transform="translate(1378 1634)"><use href="#endsWide"/><path class="ln" d="M-249 0h178v3h6v4H65V3h6V0h178"/><use href="#baseOpen"/><use href="#feet"/></g>
      <path class="axis" d="M330 1721v59h60"/>
      <text class="axis-name" x="335" y="1717">y</text><text class="axis-name" x="395" y="1781">x</text>
    </svg>
  </div>
</section>

<aside class="right">
  <section class="panel">
    <header>
      <div class="ptitle"><h2>Panels: Layers</h2><button class="gear" aria-label="Panel options"><svg class="g"><use href="#gear"/></svg><svg class="c"><use href="#chev"/></svg></button></div>
      <div class="picons">
        <button class="on" aria-label="Layers"><svg><use href="#pLayers"/></svg></button>
        <button aria-label="Layout layers"><svg><use href="#pLayerDoc"/></svg></button>
        <button aria-label="Notes"><svg><use href="#pDoc"/></svg></button>
        <button aria-label="Properties"><svg><use href="#pBox"/></svg></button>
        <button aria-label="Command history"><svg><use href="#pScroll"/></svg></button>
        <button aria-label="Display"><svg><use href="#pMonitor"/></svg></button>
        <button aria-label="Help"><svg><use href="#pHelp"/></svg></button>
        <button aria-label="Notifications"><svg><use href="#pBell"/></svg></button>
        <button aria-label="Layouts"><svg><use href="#pGrid"/></svg></button>
        <button aria-label="Layer states"><svg><use href="#pDocLayers"/></svg></button>
        <button aria-label="Named views"><svg><use href="#pCamera"/></svg></button>
        <button aria-label="Named CPlanes"><svg><use href="#pPlane"/></svg></button>
        <button aria-label="Environments"><svg><use href="#pTube"/></svg></button>
        <button aria-label="Textures"><svg><use href="#pCheck"/></svg></button>
      </div>
    </header>
    <div class="list">
    <table>
      <thead><tr><th class="name">Name</th><th class="s"></th><th class="s"></th><th class="s"></th><th class="w"></th><th class="m"></th></tr></thead>
      <tbody>
      <tr><td>Default</td><td><input type="radio" name="layer" aria-label="Default current"></td><td><svg><use href="#bulb"/></svg></td><td><svg><use href="#unlock"/></svg></td><td><i style="background:#000"></i></td><td><b></b></td></tr>
      <tr class="cur"><td>POINTS</td><td><input type="radio" name="layer" aria-label="POINTS current" checked></td><td><svg><use href="#bulb"/></svg></td><td><svg><use href="#unlock"/></svg></td><td><i style="background:#000"></i></td><td><b></b></td></tr>
      <tr><td>Layer 01</td><td><input type="radio" name="layer" aria-label="Layer 01 current"></td><td><svg><use href="#bulb"/></svg></td><td><svg><use href="#unlock"/></svg></td><td><i style="background:#c5341c"></i></td><td><b></b></td></tr>
      <tr><td>Layer 02</td><td><input type="radio" name="layer" aria-label="Layer 02 current"></td><td><svg><use href="#bulb"/></svg></td><td><svg><use href="#unlock"/></svg></td><td><i style="background:#8448cf"></i></td><td><b></b></td></tr>
      <tr><td>Layer 03</td><td><input type="radio" name="layer" aria-label="Layer 03 current"></td><td><svg><use href="#bulb"/></svg></td><td><svg><use href="#unlock"/></svg></td><td><i style="background:#000"></i></td><td><b></b></td></tr>
      <tr><td>Layer 04</td><td><input type="radio" name="layer" aria-label="Layer 04 current"></td><td><svg><use href="#bulb"/></svg></td><td><svg><use href="#unlock"/></svg></td><td><i style="background:#368a22"></i></td><td><b></b></td></tr>
      <tr><td>Layer 05</td><td><input type="radio" name="layer" aria-label="Layer 05 current"></td><td><svg><use href="#bulb"/></svg></td><td><svg><use href="#unlock"/></svg></td><td><i style="background:#bd5a55"></i></td><td><b></b></td></tr>
      <tr><td class="open"><svg class="tri"><use href="#tri"/></svg>Make2D</td><td><input type="radio" name="layer" aria-label="Make2D current"></td><td><svg><use href="#bulb"/></svg></td><td><svg><use href="#unlock"/></svg></td><td><i style="background:#000"></i></td><td><b></b></td></tr>
      <tr><td class="open l1"><svg class="tri"><use href="#tri"/></svg>Visible</td><td><input type="radio" name="layer" aria-label="Visible current"></td><td><svg><use href="#bulb"/></svg></td><td><svg><use href="#unlock"/></svg></td><td><i style="background:#000"></i></td><td><b></b></td></tr>
      <tr><td class="l2">Curves</td><td><input type="radio" name="layer" aria-label="Curves current"></td><td><svg><use href="#bulb"/></svg></td><td><svg><use href="#unlock"/></svg></td><td><i style="background:#000"></i></td><td><b></b></td></tr>
      <tr><td>Layer 06</td><td><input type="radio" name="layer" aria-label="Layer 06 current"></td><td><svg><use href="#bulb"/></svg></td><td><svg><use href="#unlock"/></svg></td><td><i style="background:#fffd4c"></i></td><td><b></b></td></tr>
      <tr><td>Layer 07</td><td><input type="radio" name="layer" aria-label="Layer 07 current"></td><td><svg><use href="#bulb"/></svg></td><td><svg><use href="#unlock"/></svg></td><td><i style="background:#f5c748"></i></td><td><b></b></td></tr>
      <tr><td>Layer 08</td><td><input type="radio" name="layer" aria-label="Layer 08 current"></td><td><svg><use href="#bulb"/></svg></td><td><svg><use href="#unlock"/></svg></td><td><i style="background:#a4f7cb"></i></td><td><b></b></td></tr>
      </tbody>
    </table>
    </div>
    <div class="hscroll"><span></span></div>
    <footer>
      <div class="seg"><button aria-label="Add layer"><svg viewBox="0 0 28 28"><path d="M14 1v26M1 14h26" stroke="#555" stroke-width="2"/></svg></button><button aria-label="Remove layer"><svg viewBox="0 0 28 28"><path d="M1 14h26" stroke="#bbb" stroke-width="2"/></svg></button></div>
      <button class="gear wide" aria-label="Layer options"><svg class="g"><use href="#gear"/></svg><svg class="c"><use href="#chev"/></svg></button>
    </footer>
  </section>
  <section class="panel detail">
    <header>
      <div class="ptitle"><h2>Panels: Layout and detail layer information</h2><button class="gear" aria-label="Panel options"><svg class="g"><use href="#gear"/></svg><svg class="c"><use href="#chev"/></svg></button></div>
      <div class="picons">
        <button class="on" aria-label="Layout layers"><svg><use href="#pLayerDoc"/></svg></button>
        <button aria-label="Notes"><svg><use href="#pDoc"/></svg></button>
        <button aria-label="Properties"><svg><use href="#pBox"/></svg></button>
        <button aria-label="Command history"><svg><use href="#pScroll"/></svg></button>
        <button aria-label="Display"><svg><use href="#pMonitor"/></svg></button>
        <button aria-label="Help"><svg><use href="#pHelp"/></svg></button>
        <button aria-label="Layouts"><svg><use href="#pGrid"/></svg></button>
        <button aria-label="Layer states"><svg><use href="#pDocLayers"/></svg></button>
        <button aria-label="Environments"><svg><use href="#pTube"/></svg></button>
      </div>
    </header>
    <div class="empty"><p>Select a layout</p></div>
  </section>
</aside>
</main>
</div>
</body>
</html>
```

FILE: styles.css
```css
* { box-sizing: border-box; }
html, body { height: 100%; }
body { margin: 0; overflow: hidden; font-family: Inter, "Liberation Sans", sans-serif; font-size: 22px; color: #222; background: #f3f3f3; }
button { margin: 0; padding: 0; border: 0; background: none; font: inherit; color: inherit; }
.defs { position: absolute; }
.app { display: flex; flex-direction: column; height: 100%; border-top: 10px solid #000; }

.titlebar { flex: none; height: 84px; display: flex; align-items: center; padding: 8px 24px 0 20px; background: linear-gradient(#f9f9f9, #f3f3f3 60%); border-bottom: 2px solid #fff; }
.side-toggle { width: 40px; height: 40px; border: 2px solid #e6bd42; border-left-width: 12px; }
.side-toggle.right { border-left-width: 2px; border-right-width: 12px; margin-left: auto; }
.modes { display: flex; gap: 20px; margin-left: 62px; width: 1598px; }
.modes button { height: 30px; padding: 0 21px; border-radius: 6px; font-size: 25px; line-height: 30px; font-weight: 600; color: #727272; }
.modes .on { background: #d0d0d0; color: #444; }
.status { display: flex; align-items: center; gap: 23px; }
.status svg { display: block; width: 44px; height: 44px; overflow: visible; }
.current-layer { display: flex; align-items: center; width: 380px; height: 36px; padding: 0 5px; border-radius: 8px; border: 1px solid #e8e8e8; background: #f5f5f5; color: #6b6b6b; }
.chip { width: 28px; height: 28px; background: #000; }
.current-layer .label { flex: 1; text-align: center; }

.tabs { flex: none; display: flex; height: 34px; padding-left: 12px; background: #cfcfcf; border-top: 2px solid #999; border-bottom: 2px solid #999; }
.tabs button { padding: 0 20px 3px; font-size: 19px; font-weight: 700; line-height: 27px; color: #111; border-right: 2px solid #999; border-top-right-radius: 6px; background: #d8d8d8; }
.tabs .on { color: #eac35c; background: #efefef; height: 34px; }

.toolbar { flex: none; display: flex; gap: 10px; height: 62px; padding: 9px 0 0 1px; background: #ededed; border-bottom: 6px solid #e4e5e8; }
.toolbar button, .tools button { position: relative; width: 50px; height: 44px; }
.toolbar svg, .tools svg { display: block; width: 44px; height: 44px; margin: 0 3px; overflow: visible; }
.drop::after { content: ""; position: absolute; right: 0; bottom: -1px; border: 5px solid transparent; border-top: 9px solid #333; border-bottom: 0; }

.work { flex: 1; min-height: 0; display: grid; grid-template-columns: 258px 1fr 650px; }
.left { display: flex; flex-direction: column; min-height: 0; border-right: 2px solid #808080; background: #f3f3f3; }
.cap { height: 52px; background: linear-gradient(#f5f5f5, #e2e2e2); border-bottom: 2px solid #ccc; }
.command { padding: 21px 16px 17px 13px; }
.command input { display: block; width: 100%; height: 40px; padding: 0 7px; border: 1px solid #e0e0e0; border-bottom: 2px solid #c4c4c4; background: #fff; font: inherit; font-size: 25px; }
.command input::placeholder { color: #bbb; opacity: 1; }
.palette { flex: none; display: flex; justify-content: space-between; height: 529px; overflow: hidden; border-bottom: 2px solid #808080; }
.tools { display: grid; grid-template-columns: repeat(3, 50px); grid-auto-rows: 44px; gap: 16px 10px; padding: 7px 0 0 1px; align-content: start; }
.k { stroke: #000; stroke-width: 2; }
.k .n { fill: #fff; }
.vscroll { width: 28px; padding: 6px 6px 0; background: #fafafa; border-left: 1px solid #ececec; }
.vscroll span { display: block; height: 374px; border-radius: 8px; background: #c2c2c2; }

.osnap { flex: 1; padding: 10px 0 0 32px; border-bottom: 2px solid #ddd; margin-bottom: 6px; }
.osnap label { display: flex; align-items: center; gap: 8px; height: 40px; color: #222; }
.osnap .pick { height: 30px; }
.osnap fieldset { margin: 6px 0 36px; padding: 0 0 0 4px; border: 0; }
.osnap .all { padding-left: 4px; }
.osnap .off { color: #b8b8b8; }
input[type=radio], input[type=checkbox] { appearance: none; flex: none; width: 24px; height: 24px; margin: 0; border: 2px solid #dcdcdc; background: #fff; }
input[type=radio] { border-radius: 50%; }
input[type=radio]:checked { border: 8px solid #e6b83c; }
input[type=checkbox] { border-radius: 5px; }
input[type=checkbox]:disabled { background: #f6f6f6; border-color: #ececec; }
input[type=checkbox]:checked { background: #e6b83c; border-color: #e6b83c; }
input[type=checkbox]:checked::after { content: ""; display: block; width: 7px; height: 13px; margin: 1px 0 0 6px; border: solid #fff; border-width: 0 3px 3px 0; transform: rotate(42deg); }

.center { display: flex; flex-direction: column; min-width: 0; min-height: 0; background: #fdfdfd; }
.views { flex: none; display: flex; align-items: center; height: 52px; padding: 0 19px; background: linear-gradient(#f5f5f5, #e0e0e0); border-bottom: 2px solid #707070; font-size: 25px; color: #777; }
.views button { padding: 0 40px; line-height: 28px; border-left: 2px solid #777; margin-bottom: 4px; }
.views .vi { padding: 0; border: 0; margin-right: 32px; }
.views .vi + .vi { margin-right: 28px; }
.views .on { color: #e9bd45; }
.vi svg { display: block; width: 32px; height: 28px; }
.viewport { position: relative; flex: 1; min-height: 0; }
.vlabel { position: absolute; left: 2px; top: 2px; padding: 0 9px; background: #1d4f88; color: #fff; font-size: 23px; font-weight: 700; line-height: 38px; }
.canvas { display: block; width: 100%; height: 100%; }
.sheet, .ln { fill: none; stroke: #333; stroke-width: 1.2; }
.gap { fill: #fdfdfd; }
.hole { fill: none; stroke: #000; stroke-width: 2; }
.dot { fill: none; stroke: #444; stroke-width: 1; }
.axis { fill: none; stroke: #777; stroke-width: 1; }
.axis-name { font-size: 24px; fill: #555; }

.right { display: flex; flex-direction: column; min-height: 0; border-left: 2px solid #808080; overflow: hidden; }
.panel header { background: linear-gradient(#f7f7f7, #e0e0e0); border-bottom: 2px solid #c8c8c8; padding-bottom: 6px; }
.ptitle { display: flex; align-items: center; height: 46px; padding: 2px 5px 0 0; }
.ptitle h2 { flex: 1; margin: 0; padding-left: 24px; font: 22px/30px "Liberation Sans", Arial, sans-serif; text-align: center; }
.gear { display: flex; align-items: center; justify-content: center; gap: 5px; width: 55px; height: 31px; border: 2px solid #bbb; border-radius: 7px; background: #fff; }
.gear .g { width: 20px; height: 20px; }
.gear .c { width: 12px; height: 8px; }
.gear.wide { width: 66px; height: 33px; gap: 12px; border: 1px solid #ddd; }
.picons { display: flex; flex-wrap: wrap; justify-content: center; padding: 0 30px 0 18px; }
.picons button { width: 60px; height: 60px; display: grid; place-items: center; }
.picons svg { width: 48px; height: 48px; fill: none; stroke: #777; stroke-width: 2; }
.picons .on svg { stroke: #efcf6c; }
.list { height: 668px; background: #fff; overflow: hidden; }
table { table-layout: fixed; width: 692px; border-collapse: collapse; font-size: 21px; color: #222; }
th { height: 56px; padding: 0; border-bottom: 2px solid #eaeaea; font-weight: 400; background: linear-gradient(#e2e2e2, #e2e2e2) no-repeat left center / 2px 32px; }
th.name { width: 437px; text-align: left; padding-left: 58px; background: none; }
th.s { width: 46px; }
th.w { width: 60px; }
th.m { width: 57px; }
td { height: 34px; padding: 0; }
tbody::before { content: ""; display: table-row; height: 9px; }
td:first-child { padding-left: 54px; white-space: nowrap; }
td:first-child.l2 { padding-left: 117px; }
td:first-child.open { padding-left: 28px; }
td:first-child.open.l1 { padding-left: 60px; }
td svg, td input[type=radio], td i, td b { display: block; margin: 0 auto; }
td svg { width: 28px; height: 30px; }
.tri.tri { display: inline-block; width: 16px; height: 9px; margin: 0 10px 0 0; vertical-align: middle; }
td i { width: 28px; height: 28px; margin: 0 16px; }
td b { width: 30px; height: 30px; margin: 0 3px; border: 2px solid #333; border-radius: 50%; }
.cur svg { opacity: .35; }
.list input[type=radio]:checked { border-color: #eeb02f; }
.hscroll { height: 31px; padding: 8px 6px; background: #fafafa; border: 1px solid #e8e8e8; border-width: 1px 0; }
.hscroll span { display: block; width: 308px; height: 15px; border-radius: 8px; background: #c2c2c2; }
.panel footer { display: flex; align-items: center; gap: 32px; height: 68px; padding-left: 20px; border-left: 16px solid #838383; border-bottom: 2px solid #808080; background: #f3f3f3; }
.seg { display: flex; width: 100px; height: 32px; border: 1px solid #e8e8e8; border-radius: 7px; }
.seg button { flex: 1; display: grid; place-items: center; }
.seg button + button { border-left: 1px solid #e4e4e4; }
.seg svg { width: 27px; height: 27px; }
.detail { flex: 1; display: flex; flex-direction: column; min-height: 0; }
.detail header { padding-bottom: 7px; }
.empty { flex: 1; display: grid; place-items: center; border-left: 16px solid #838383; background: #f3f3f3; padding: 26px 16px 0 0; font-size: 25px; }
.empty p { margin: 0; }
```
